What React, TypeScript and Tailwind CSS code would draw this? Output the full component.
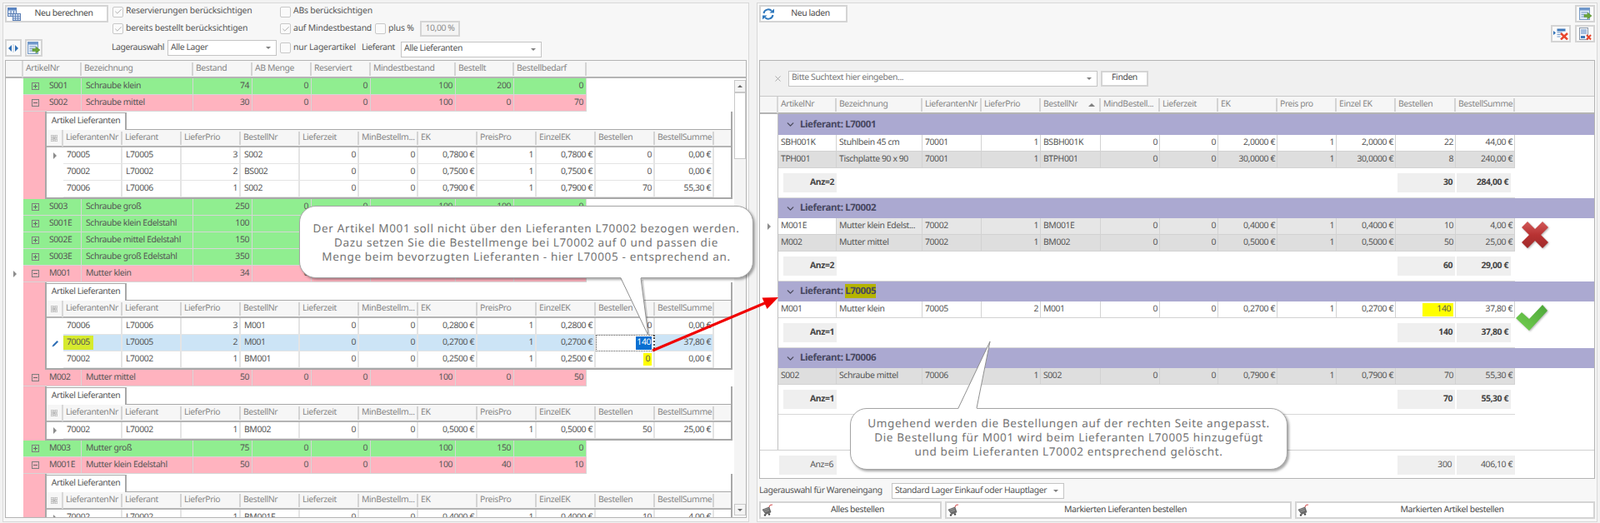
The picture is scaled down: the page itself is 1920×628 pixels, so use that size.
import React, { type FC, type ReactNode } from "react";
import { Check, ChevronDown, X } from "lucide-react";

const MASTER_COLS = "grid-cols-[21px_70px_134px_71px_71px_71px_102px_70px_87px]";
const DETAIL_COLS = "grid-cols-[20px_repeat(11,71px)]";
const ORDER_HEAD_COLS = "grid-cols-[22px_70px_103px_71px_71px_72px_71px_70px_71px_71px_71px_72px_71px]";
const ORDER_ROW_COLS = "grid-cols-[70px_103px_71px_71px_72px_71px_70px_71px_71px_71px_72px_71px]";

const MASTER_HEAD = ["ArtikelNr", "Bezeichnung", "Bestand", "AB Menge", "Reserviert", "Mindestbestand", "Bestellt", "Bestellbedarf"];
const DETAIL_HEAD = ["LieferantenNr", "Lieferant", "LieferPrio", "BestellNr", "Lieferzeit", "MinBestellm...", "EK", "PreisPro", "EinzelEK", "Bestellen", "BestellSumme"];
const ORDER_HEAD = ["ArtikelNr", "Bezeichnung", "LieferantenNr", "LieferPrio", "BestellNr", "MindBestell...", "Lieferzeit", "EK", "Preis pro", "Einzel EK", "Bestellen", "BestellSumme"];

// which detail / order columns are left aligned
const DETAIL_LEFT = [0, 1, 3];
const ORDER_LEFT = [0, 1, 2, 4];

type Master = { values: string[]; color: "green" | "pink"; details?: string[][]; active?: boolean };

const MASTERS: Master[] = [
	{ values: ["S001", "Schraube klein", "74", "0", "0", "100", "200", "0"], color: "green" },
	{
		values: ["S002", "Schraube mittel", "30", "0", "0", "100", "0", "70"],
		color: "pink",
		details: [
			["70005", "L70005", "3", "S002", "0", "0", "0,7800 €", "1", "0,7800 €", "0", "0,00 €"],
			["70002", "L70002", "2", "BS002", "0", "0", "0,7500 €", "1", "0,7500 €", "0", "0,00 €"],
			["70006", "L70006", "1", "S002", "0", "0", "0,7900 €", "1", "0,7900 €", "70", "55,30 €"],
		],
	},
	{ values: ["S003", "Schraube groß", "250", "0", "0", "100", "100", "0"], color: "green" },
	{ values: ["S001E", "Schraube klein Edelstahl", "100", "0", "0", "100", "0", "0"], color: "green" },
	{ values: ["S002E", "Schraube mittel Edelstahl", "150", "0", "0", "100", "0", "0"], color: "green" },
	{ values: ["S003E", "Schraube groß Edelstahl", "350", "0", "0", "100", "0", "0"], color: "green" },
	{
		values: ["M001", "Mutter klein", "34", "0", "0", "100", "0", "66"],
		color: "pink",
		active: true,
		details: [
			["70006", "L70006", "3", "M001", "0", "0", "0,2800 €", "1", "0,2800 €", "0", "0,00 €"],
			["70005", "L70005", "2", "M001", "0", "0", "0,2700 €", "1", "0,2700 €", "140", "37,80 €"],
			["70002", "L70002", "1", "BM001", "0", "0", "0,2500 €", "1", "0,2500 €", "0", "0,00 €"],
		],
	},
	{
		values: ["M002", "Mutter mittel", "50", "0", "0", "100", "0", "50"],
		color: "pink",
		details: [["70002", "L70002", "1", "BM002", "0", "0", "0,5000 €", "1", "0,5000 €", "50", "25,00 €"]],
	},
	{ values: ["M003", "Mutter groß", "75", "0", "0", "100", "150", "0"], color: "green" },
	{
		values: ["M001E", "Mutter klein Edelstahl", "50", "0", "0", "100", "40", "10"],
		color: "pink",
		details: [["70002", "L70002", "1", "BM001E", "0", "0", "0,4000 €", "1", "0,4000 €", "10", "4,00 €"]],
	},
];

type Group = { name: string; rows: string[][]; count: string; qty: string; sum: string };

const GROUPS: Group[] = [
	{
		name: "L70001",
		rows: [
			["SBH001K", "Stuhlbein 45 cm", "70001", "1", "BSBH001K", "0", "0", "2,0000 €", "1", "2,0000 €", "22", "44,00 €"],
			["TPH001", "Tischplatte 90 x 90", "70001", "1", "BTPH001", "0", "0", "30,0000 €", "1", "30,0000 €", "8", "240,00 €"],
		],
		count: "Anz=2",
		qty: "30",
		sum: "284,00 €",
	},
	{
		name: "L70002",
		rows: [
			["M001E", "Mutter klein Edelst...", "70002", "1", "BM001E", "0", "0", "0,4000 €", "1", "0,4000 €", "10", "4,00 €"],
			["M002", "Mutter mittel", "70002", "1", "BM002", "0", "0", "0,5000 €", "1", "0,5000 €", "50", "25,00 €"],
		],
		count: "Anz=2",
		qty: "60",
		sum: "29,00 €",
	},
	{
		name: "L70005",
		rows: [["M001", "Mutter klein", "70005", "2", "M001", "0", "0", "0,2700 €", "1", "0,2700 €", "140", "37,80 €"]],
		count: "Anz=1",
		qty: "140",
		sum: "37,80 €",
	},
	{
		name: "L70006",
		rows: [["S002", "Schraube mittel", "70006", "1", "S002", "0", "0", "0,7900 €", "1", "0,7900 €", "70", "55,30 €"]],
		count: "Anz=1",
		qty: "70",
		sum: "55,30 €",
	},
];

const CalcIcon = () => (
	<svg width="16" height="16" viewBox="0 0 16 16" className="shrink-0">
		<rect x="0.5" y="0.5" width="10" height="10" fill="#dbe6f5" stroke="#5b7fb5" />
		<rect x="0.5" y="0.5" width="10" height="3" fill="#5b86c4" />
		<path d="M4 4v7M7.5 4v7M1 7.5h9" stroke="#5b7fb5" />
		<rect x="6.5" y="7.5" width="9" height="8" fill="#cfdcf0" stroke="#5b7fb5" />
		<path d="M9.5 8v7M12.5 8v7M7 10.5h8M7 13h8" stroke="#5b7fb5" strokeWidth="0.8" />
	</svg>
);

const ExpandColumnsIcon = () => (
	<svg width="14" height="10" viewBox="0 0 14 10">
		<path d="M5 1v8L1 5z" fill="#2f6fb5" />
		<path d="M9 1v8l4-4z" fill="#2f6fb5" />
		<path d="M7 0v10" stroke="#b8c8dc" />
	</svg>
);

const SheetArrowIcon = () => (
	<svg width="15" height="16" viewBox="0 0 15 16">
		<rect x="0.5" y="0.5" width="12" height="14" fill="#dde8f6" stroke="#7a9cc6" />
		<rect x="0.5" y="0.5" width="12" height="3" fill="#6f97cc" />
		<path d="M2.5 6h8M2.5 8.5h4M2.5 11h4" stroke="#7a9cc6" />
		<path d="M6 8.5h4V6l5 4-5 4v-2.5H6z" fill="#6aa53a" stroke="#4b8526" strokeWidth="0.5" />
	</svg>
);

const GridDeleteIcon = () => (
	<svg width="18" height="14" viewBox="0 0 18 14">
		<path d="M0 3v5l3-2.5z" fill="#2f6fb5" />
		<rect x="4.5" y="0.5" width="10" height="3" fill="#3f78ba" />
		<path d="M4.5 5h6M4.5 7.5h4M4.5 10h4" stroke="#6f97cc" strokeWidth="1.2" />
		<path d="M9 6l8 7.5M17 6l-8 7.5" stroke="#e8452c" strokeWidth="2.4" />
	</svg>
);

const PageDeleteIcon = () => (
	<svg width="15" height="16" viewBox="0 0 15 16">
		<rect x="0.5" y="0.5" width="10" height="14" fill="#f2f5fa" stroke="#8a97a8" />
		<path d="M2 3h7M2 5h7M2 7h7" stroke="#5b86c4" />
		<rect x="2" y="10" width="5" height="3" fill="#3f78ba" />
		<path d="M9 9l5 5.5M14 9l-5 5.5" stroke="#e8452c" strokeWidth="2" />
	</svg>
);

const RefreshIcon = () => (
	<svg width="16" height="14" viewBox="0 0 16 14">
		<path d="M2.5 6A5.5 5.5 0 0 1 12 3.2" fill="none" stroke="#2f78bd" strokeWidth="2" />
		<path d="M9.5 5.5h5.5V0.5z" fill="#2f78bd" />
		<path d="M13.5 8A5.5 5.5 0 0 1 4 10.8" fill="none" stroke="#2f78bd" strokeWidth="2" />
		<path d="M6.5 8.5H1v5z" fill="#2f78bd" />
	</svg>
);

const CartIcon = () => (
	<svg width="14" height="15" viewBox="0 0 14 15">
		<path d="M1 7l8-3 2 6-6 2.5z" fill="#6b6b6b" stroke="#444" strokeWidth="0.6" />
		<path d="M2.5 7.5l6-2M3.5 9.5l5.5-2" stroke="#b5b5b5" strokeWidth="0.7" />
		<path d="M9 4l1-2.5 3-.5" fill="none" stroke="#d24a4a" strokeWidth="1" />
		<circle cx="4" cy="13.5" r="1.2" fill="#444" />
		<circle cx="9" cy="12.5" r="1.2" fill="#444" />
	</svg>
);

const ColumnChooserIcon = () => (
	<svg width="8" height="8" viewBox="0 0 8 8">
		<path d="M0 0h3v3H0zM5 0h3v3H5zM0 5h3v3H0zM5 5h3v3H5z" fill="none" stroke="#9a9a9a" strokeWidth="0.8" />
		<path d="M3 3l2 2M5 3L3 5" stroke="#9a9a9a" strokeWidth="0.7" />
	</svg>
);

const RowArrow = () => <span className="block h-0 w-0 border-y-[4px] border-l-[4px] border-y-transparent border-l-[#8c8c8c]" />;

const PencilIcon = () => (
	<svg width="9" height="9" viewBox="0 0 9 9">
		<path d="M0.5 8.5L1.5 6 6.5 1l1.5 1.5-5 5z" fill="#2f6fb5" />
	</svg>
);

const Box: FC<{ children?: ReactNode; className?: string }> = ({ children, className = "" }) => (
	<div className={`flex items-center justify-center border-2 border-[#d4d4d4] bg-[#fafafa] ${className}`}>{children}</div>
);

const WideButton: FC<{ icon: ReactNode; label: string; className: string }> = ({ icon, label, className }) => (
	<div className={`relative flex h-[21px] items-center justify-center border-2 border-[#d4d4d4] bg-white pl-[17px] text-[#4a4a4a] ${className}`}>
		<span className="absolute left-[1px] flex items-center">{icon}</span>
		{label}
	</div>
);

const CheckField: FC<{ checked?: boolean; label?: string }> = ({ checked, label }) => (
	<div className="flex items-center gap-[3px] tracking-[-0.2px] text-[#565656]">
		<span className="flex h-[13px] w-[13px] shrink-0 items-center justify-center rounded-[2px] border border-[#c8c8c8] bg-[#fafafa]">
			{checked && <Check size={10} strokeWidth={1.5} className="text-[#808080]" />}
		</span>
		{label}
	</div>
);

const SelectBox: FC<{ value: string; className: string }> = ({ value, className }) => (
	<div className={`flex items-center justify-between border border-[#c4c4c4] bg-white pl-[3px] pr-[6px] text-[#565656] ${className}`}>
		{value}
		<span className="h-0 w-0 border-x-[3px] border-t-[3px] border-x-transparent border-t-[#808080]" />
	</div>
);

const Head: FC<{ labels: string[]; cols: string; sortedAt?: number; first?: ReactNode; widthClass: string }> = ({
	labels,
	cols,
	sortedAt,
	first,
	widthClass,
}) => (
	<div className="h-[21px] shrink-0 border-b-2 border-[#b4b4b4] bg-[#f6f6f6]">
		<div className={`grid h-[19px] ${cols} ${widthClass}`}>
			<div className="flex items-center justify-center border-r-2 border-[#d8d8d8]">{first}</div>
			{labels.map((label, i) => (
				<div key={label} className="my-[2px] flex min-w-0 items-center justify-between border-r-2 border-[#d4d4d4] pl-[3px] pr-[5px] text-[#868686]">
					{label}
					{i === sortedAt && <span className="h-0 w-0 border-x-[4px] border-b-[4px] border-x-transparent border-b-[#808080]" />}
				</div>
			))}
		</div>
	</div>
);

const DetailTable: FC<{ rows: string[][]; editing?: boolean }> = ({ rows, editing }) => (
	<div className="w-[825px] border-x-2 border-b-2 border-[#a8a8a8] bg-white pt-px">
		<div className="flex h-[21px] border-b border-[#a8a8a8]">
			<div className="-mb-px flex w-[96px] items-center justify-center border-r-2 border-t border-[#a8a8a8] bg-white text-[#565656]">
				Artikel Lieferanten
			</div>
		</div>
		<Head labels={DETAIL_HEAD} cols={DETAIL_COLS} first={<ColumnChooserIcon />} widthClass="w-[801px]" />
		{rows.map((row, r) => {
			const selected = editing && r === 1;
			return (
				<div key={row[0]} className={`grid h-[20px] w-[801px] ${DETAIL_COLS}`}>
					<div className="flex items-center justify-center bg-white">
						{selected ? <PencilIcon /> : !editing && r === 0 ? <RowArrow /> : null}
					</div>
					{row.map((value, c) => {
						const isLeft = DETAIL_LEFT.includes(c);
						const isEdit = selected && c === 9;
						const isMarked = editing && r === 2 && c === 9;
						const isNr = selected && c === 0;
						return (
							<div
								key={c}
								className={`flex items-center border-b border-r-2 border-[#e4e4e4] text-[#555] ${
									isLeft ? "justify-start pl-[4px]" : "justify-end pr-[2px]"
								} ${selected ? "bg-[#cce4f6]" : "bg-white"} ${isEdit ? "border border-dotted !border-[#555] !bg-white" : ""}`}
							>
								{isEdit ? (
									<span className="bg-[#0a6fd1] px-px text-white">{value}</span>
								) : isMarked ? (
									<span className="bg-[#ffff00] px-[2px]">{value}</span>
								) : isNr ? (
									<span className="-ml-[4px] bg-[#d6ea2e] px-[4px] py-px">{value}</span>
								) : (
									value
								)}
							</div>
						);
					})}
				</div>
			);
		})}
	</div>
);

const MasterRow: FC<{ item: Master }> = ({ item }) => {
	const bg = item.color === "green" ? "bg-[#90ee90]" : "bg-[#ffb3bf]";
	return (
		<>
			<div className={`grid h-[20px] w-[697px] ${MASTER_COLS}`}>
				<div className="flex items-center justify-center bg-white">{item.active && <RowArrow />}</div>
				<div className={`flex items-center border-r border-b border-[#d6d6d6] ${bg}`}>
					<span className="ml-[10px] flex h-[9px] w-[9px] items-center justify-center border border-[#7d7d7d]">
						<span className="relative block h-px w-[5px] bg-[#666]">
							{!item.details && <span className="absolute left-[2px] top-[-2px] block h-[5px] w-px bg-[#666]" />}
						</span>
					</span>
					<span className="ml-[12px] text-[#555]">{item.values[0]}</span>
				</div>
				{item.values.slice(1).map((value, i) => (
					<div
						key={i}
						className={`flex items-center border-r border-b border-[#d6d6d6] text-[#555] ${bg} ${
							i === 0 ? "pl-[5px]" : "justify-end pr-[3px]"
						}`}
					>
						{value}
					</div>
				))}
			</div>
			{item.details && (
				<div className="flex">
					<div className="w-[21px] shrink-0 bg-white" />
					<div className={`w-[26px] shrink-0 ${bg}`} />
					<DetailTable rows={item.details} editing={item.active} />
				</div>
			)}
		</>
	);
};

const Scrollbar = () => (
	<div className="flex w-[14px] shrink-0 flex-col bg-white pt-[2px]">
		<div className="flex h-[15px] items-center justify-center border border-[#c8c8c8] bg-[#f4f4f4]">
			<span className="h-0 w-0 border-x-[3px] border-b-[3px] border-x-transparent border-b-[#666]" />
		</div>
		<div className="h-[80px] border border-[#c8c8c8] bg-white" />
		<div className="flex-1 bg-[#f4f4f4]" />
		<div className="mb-[2px] flex h-[14px] items-center justify-center border border-[#c8c8c8] bg-[#f4f4f4]">
			<span className="h-0 w-0 border-x-[3px] border-t-[3px] border-x-transparent border-t-[#666]" />
		</div>
	</div>
);

const LeftPanel = () => (
	<div className="flex h-[624px] w-[896px] shrink-0 flex-col border border-[#d8d8d8] bg-[#f7f7f7] px-[2px]">
		<div className="h-[68px] shrink-0">
			<div className="grid grid-cols-[129px_201px_114px_54px_auto] grid-rows-[20px_21px]">
				<div className="row-span-2 pt-[2px]">
					<WideButton icon={<CalcIcon />} label="Neu berechnen" className="w-[124px]" />
				</div>
				<CheckField checked label="Reservierungen berücksichtigen" />
				<CheckField label="ABs berücksichtigen" />
				<div />
				<div />
				<CheckField checked label="bereits bestellt berücksichtigen" />
				<CheckField checked label="auf Mindestbestand" />
				<CheckField label="plus %" />
				<div className="flex h-[19px] w-[48px] items-center justify-center self-center border-2 border-[#d4d4d4] bg-[#f4f4f4] text-[#8c8c8c]">
					10,00 %
				</div>
			</div>
			<div className="mt-[1px] flex h-[23px] items-center">
				<Box className="h-[21px] w-[20px]">
					<ExpandColumnsIcon />
				</Box>
				<Box className="ml-[4px] h-[21px] w-[21px]">
					<SheetArrowIcon />
				</Box>
				<span className="ml-[83px] w-[67px] text-[#565656]">Lagerauswahl</span>
				<SelectBox value="Alle Lager" className="h-[19px] w-[131px]" />
				<div className="ml-[4px] w-[98px]">
					<CheckField label="nur Lagerartikel" />
				</div>
				<span className="w-[47px] text-[#565656]">Lieferant</span>
				<SelectBox value="Alle Lieferanten" className="mt-[3px] h-[19px] w-[169px]" />
			</div>
		</div>
		<div className="mb-[4px] flex min-h-0 w-[890px] flex-1 flex-col overflow-hidden border border-[#b4b4b4] bg-white">
			<Head labels={MASTER_HEAD} cols={MASTER_COLS} widthClass="w-[697px]" />
			<div className="flex min-h-0 flex-1">
				<div className="min-w-0 flex-1 overflow-hidden">
					{MASTERS.map((item) => (
						<MasterRow key={item.values[0]} item={item} />
					))}
				</div>
				<Scrollbar />
			</div>
		</div>
	</div>
);

const GroupBlock: FC<{ group: Group; first: boolean }> = ({ group, first }) => (
	<div>
		<div className={`flex items-center bg-[#aba9d1] font-bold text-[#474760] ${first ? "h-[25px]" : "h-[24px]"}`}>
			<ChevronDown size={13} strokeWidth={2.5} className="ml-[8px] text-[#4a4a5c]" />
			<span className="ml-[5px] text-[11.5px]">
				Lieferant:{" "}
				{group.name === "L70005" ? <span className="bg-[#b5b400] py-px">{group.name}</span> : group.name}
			</span>
		</div>
		{group.rows.map((row, r) => {
			const gray = group.name === "L70001" ? r === 1 : group.name === "L70002" || group.name === "L70006";
			const focused = group.name === "L70002" && r === 0;
			return (
				<div key={row[0]} className={`grid h-[20px] w-[884px] ${ORDER_ROW_COLS}`}>
					{row.map((value, c) => {
						const bg = focused ? (c === 0 ? "bg-white" : "bg-[#e6e6e6]") : gray ? "bg-[#dedede]" : "bg-white";
						const mark = group.name === "L70005" && c === 10;
						return (
							<div
								key={c}
								className={`flex items-center border-b border-r border-[#d2d2d2] text-[#555] ${bg} ${
									ORDER_LEFT.includes(c) ? "justify-start pl-[3px]" : "justify-end pr-[2px]"
								}`}
							>
								{mark ? <span className="flex h-[16px] w-[37px] items-center justify-end bg-[#ffff00] pr-[3px]">{value}</span> : value}
							</div>
						);
					})}
				</div>
			);
		})}
		<div className="flex h-[36px] w-[884px] items-start border-b border-[#d8d8d8] pt-[6px] font-bold text-[#444]">
			<div className="ml-[6px] flex h-[23px] w-[64px] items-center justify-end bg-[#efefef] pr-[3px]">{group.count}</div>
			<div className="ml-[673px] flex h-[23px] w-[69px] items-center justify-end bg-[#efefef] pr-[3px]">{group.qty}</div>
			<div className="ml-[2px] flex h-[23px] w-[65px] items-center justify-end bg-[#efefef] pr-[3px]">{group.sum}</div>
		</div>
	</div>
);

const RightPanel = () => (
	<div className="flex h-[624px] w-[1009px] shrink-0 flex-col border border-[#d8d8d8] bg-[#f7f7f7] px-[2px]">
		<div className="flex h-[68px] shrink-0 items-start justify-between pt-[2px]">
			<WideButton icon={<RefreshIcon />} label="Neu laden" className="w-[106px]" />
			<div className="flex flex-col items-end gap-[3px]">
				<Box className="h-[21px] w-[24px]">
					<SheetArrowIcon />
				</Box>
				<div className="flex gap-[5px]">
					<Box className="h-[21px] w-[24px]">
						<GridDeleteIcon />
					</Box>
					<Box className="h-[21px] w-[24px]">
						<PageDeleteIcon />
					</Box>
				</div>
			</div>
		</div>
		<div className="flex h-[503px] w-[1003px] shrink-0 flex-col overflow-hidden border border-[#b4b4b4] bg-white">
			<div className="flex h-[43px] shrink-0 items-center border-b border-[#c8c8c8] bg-[#f0f0f0]">
				<X size={11} strokeWidth={1.5} className="ml-[16px] text-[#8c8c8c]" />
				<div className="ml-[7px] flex h-[19px] w-[371px] items-center justify-between border border-[#c4c4c4] bg-white pl-[3px] pr-[6px] text-[#777]">
					Bitte Suchtext hier eingeben...
					<span className="h-0 w-0 border-x-[3px] border-t-[3px] border-x-transparent border-t-[#808080]" />
				</div>
				<div className="ml-[4px] flex h-[19px] w-[57px] items-center justify-center border-2 border-[#d4d4d4] bg-white text-[#4a4a4a]">
					Finden
				</div>
			</div>
			<Head labels={ORDER_HEAD} cols={ORDER_HEAD_COLS} sortedAt={4} widthClass="w-[906px]" />
			<div className="flex h-[403px] shrink-0">
				<div className="flex w-[22px] shrink-0 flex-col items-center border-r border-[#c0c0c0]">
					<span className="mt-[131px]">
						<RowArrow />
					</span>
				</div>
				<div className="min-w-0 flex-1">
					{GROUPS.map((group, i) => (
						<GroupBlock key={group.name} group={group} first={i === 0} />
					))}
				</div>
			</div>
			<div className="flex h-[34px] shrink-0 items-start border-t border-[#d0d0d0] pt-[6px] text-[#555]">
				<div className="ml-[23px] flex h-[23px] w-[69px] items-center justify-end bg-[#efefef] pr-[4px]">Anz=6</div>
				<div className="ml-[673px] flex h-[23px] w-[69px] items-center justify-end bg-[#efefef] pr-[4px]">300</div>
				<div className="ml-[2px] flex h-[23px] w-[70px] items-center justify-end bg-[#efefef] pr-[3px]">406,10 €</div>
			</div>
		</div>
		<div className="mt-[5px] flex h-[19px] shrink-0 items-center text-[#565656]">
			<span className="w-[159px]">Lagerauswahl für Wareneingang</span>
			<SelectBox value="Standard Lager Einkauf oder Hauptlager" className="h-[19px] w-[207px]" />
		</div>
		<div className="mt-[3px] flex shrink-0 gap-[4px]">
			<WideButton icon={<CartIcon />} label="Alles bestellen" className="w-[219px]" />
			<WideButton icon={<CartIcon />} label="Markierten Lieferanten bestellen" className="w-[416px]" />
			<WideButton icon={<CartIcon />} label="Markierten Artikel bestellen" className="w-[360px]" />
		</div>
	</div>
);

const Callouts = () => (
	<>
		<div className="absolute left-[359px] top-[247px] flex h-[87px] w-[545px] flex-col items-center rounded-[20px] border border-[#a4a4a4] bg-white pt-[18px] text-center font-['Inter',sans-serif] text-[13.5px] leading-[17px] tracking-[0.65px] text-[#737373] shadow-[2px_2px_3px_rgba(0,0,0,0.35)]">
			<span>Der Artikel M001 soll nicht über den Lieferanten L70002 bezogen werden.</span>
			<span>Dazu setzen Sie die Bestellmenge bei L70002 auf 0 und passen die</span>
			<span>Menge beim bevorzugten Lieferanten - hier L70005 - entsprechend an.</span>
		</div>
		<div className="absolute left-[1020px] top-[490px] flex h-[74px] w-[525px] flex-col items-center rounded-[20px] border border-[#a4a4a4] bg-white pt-[9px] text-center font-['Inter',sans-serif] text-[13.5px] leading-[17px] tracking-[0.65px] text-[#737373] shadow-[2px_2px_3px_rgba(0,0,0,0.35)]">
			<span>Umgehend werden die Bestellungen auf der rechten Seite angepasst.</span>
			<span>Die Bestellung für M001 wird beim Lieferanten L70005 hinzugefügt</span>
			<span>und beim Lieferanten L70002 entsprechend gelöscht.</span>
		</div>
		<svg className="pointer-events-none absolute left-0 top-0" width="1920" height="628" viewBox="0 0 1920 628">
			<defs>
				<linearGradient id="crossFill" x1="0" y1="0" x2="0" y2="1">
					<stop offset="0" stopColor="#d25a5a" />
					<stop offset="0.5" stopColor="#b83232" />
					<stop offset="1" stopColor="#a02a2a" />
				</linearGradient>
				<linearGradient id="tickFill" x1="1" y1="0" x2="0" y2="1">
					<stop offset="0" stopColor="#4da63a" />
					<stop offset="1" stopColor="#74d050" />
				</linearGradient>
			</defs>
			{/* callout tails */}
			<path d="M747 335L778 403 770 335z" fill="#000" opacity="0.18" transform="translate(2 1)" />
			<path d="M745 333L778 403 769 333z" fill="#fff" />
			<path d="M745 334L778 403 769 334" fill="none" stroke="#8f8f8f" />
			<path d="M1150 491L1188 410 1172 491z" fill="#fff" />
			<path d="M1150 490L1188 410 1172 490" fill="none" stroke="#8f8f8f" />
			{/* arrow */}
			<path d="M783 421L920 363" stroke="#f00000" strokeWidth="3" />
			<path d="M934 357L920.5 371 914.5 357.5z" fill="#f00000" />
			{/* red cross */}
			<path
				d="M1826 273l7-7 9 9 9-9 7 7-9 9 9 9-7 7-9-9-9 9-7-7 9-9z"
				fill="url(#crossFill)"
				style={{ filter: "drop-shadow(1px 1px 1px rgba(0,0,0,0.3))" }}
			/>
			{/* green tick */}
			<path
				d="M1819 382l7-7 9 8 16-17 6 7-22 24z"
				fill="url(#tickFill)"
				style={{ filter: "drop-shadow(1px 1px 1px rgba(0,0,0,0.3))" }}
			/>
		</svg>
	</>
);

export default function App() {
	return (
		<div className="relative flex h-[628px] w-[1920px] gap-[9px] overflow-hidden whitespace-nowrap bg-[#f2f2f2] pl-[3px] pt-[3px] font-['Liberation_Sans',sans-serif] text-[10.4px] tracking-[-0.4px] [text-rendering:geometricPrecision]">
			<LeftPanel />
			<RightPanel />
			<Callouts />
		</div>
	);
}
